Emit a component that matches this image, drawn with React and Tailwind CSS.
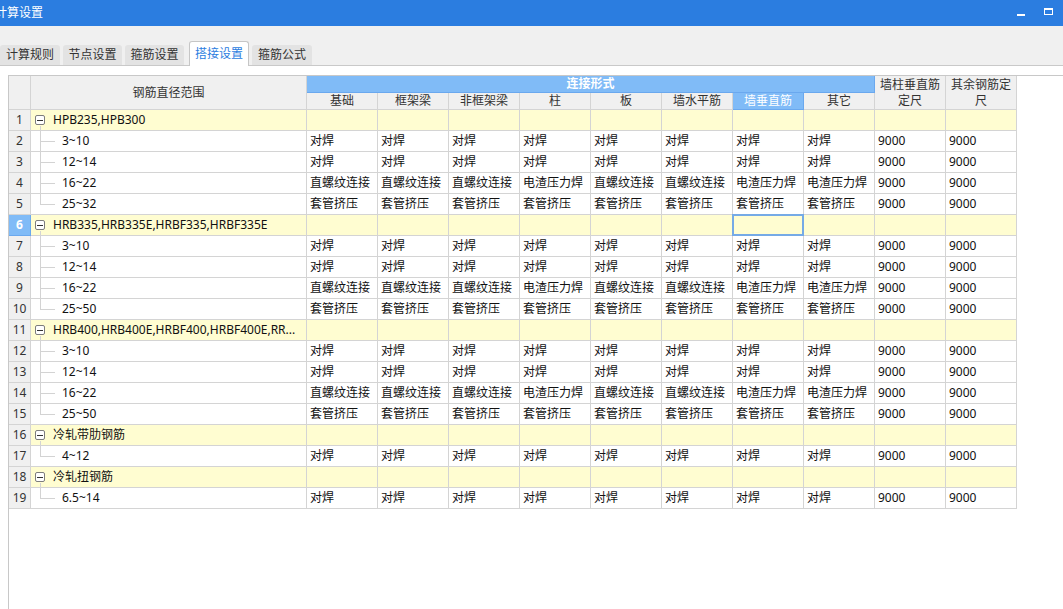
import React from 'react';

const COLS = ['基础', '框架梁', '非框架梁', '柱', '板', '墙水平筋', '墙垂直筋', '其它'];
const all = (v) => Array(8).fill(v);
const mix = ['直螺纹连接', '直螺纹连接', '直螺纹连接', '电渣压力焊', '直螺纹连接', '直螺纹连接', '电渣压力焊', '电渣压力焊'];

const groups = [
  { name: 'HPB235,HPB300', kids: [['3~10', all('对焊')], ['12~14', all('对焊')], ['16~22', mix], ['25~32', all('套管挤压')]] },
  { name: 'HRB335,HRB335E,HRBF335,HRBF335E', kids: [['3~10', all('对焊')], ['12~14', all('对焊')], ['16~22', mix], ['25~50', all('套管挤压')]] },
  { name: 'HRB400,HRB400E,HRBF400,HRBF400E,RR...', kids: [['3~10', all('对焊')], ['12~14', all('对焊')], ['16~22', mix], ['25~50', all('套管挤压')]] },
  { name: '冷轧带肋钢筋', kids: [['4~12', all('对焊')]] },
  { name: '冷轧扭钢筋', kids: [['6.5~14', all('对焊')]] },
];

// flatten tree into grid rows
const rows = [];
groups.forEach((g) => {
  rows.push({ group: true, label: g.name });
  g.kids.forEach((k, i) => rows.push({ group: false, label: k[0], vals: k[1], last: i === g.kids.length - 1 }));
});

const SEL_ROW = 5;
const SEL_COL = 6;

const Tabs = () => {
  const tabs = ['计算规则', '节点设置', '箍筋设置', '搭接设置', '箍筋公式'];
  return (
    <div className="flex items-end h-[40px] bg-[#f0f0f0] border-b border-[#c9c9c9]">
      {tabs.map((t, i) =>
        i === 3 ? (
          <div key={t} className="ml-[5px] mb-[-1px] w-[60px] h-[25px] bg-white border border-b-0 border-[#c6c6c6] rounded-t-[3px] flex items-center justify-center text-[12px] text-[#2b7de0]">
            {t}
          </div>
        ) : (
          <div
            key={t}
            className={`${i === 0 ? 'w-[60px] ml-0' : i === 4 ? 'w-[60px] ml-[3px]' : 'w-[59px] ml-[3px]'} h-[20px] bg-[#e3e3e3] rounded-t-[3px] flex items-center justify-center text-[12px] text-[#333]`}
          >
            {t}
          </div>
        )
      )}
    </div>
  );
};

const Header = () => (
  <div className="flex h-[34px]">
    <div className="w-[22px] shrink-0 bg-[#f0f0f0] border-r border-b border-[#d4d4d4]" />
    <div className="w-[276px] shrink-0 bg-[#f0f0f0] border-r border-b border-[#d4d4d4] flex items-center justify-center text-[12px] text-[#333]">
      钢筋直径范围
    </div>
    <div className="w-[568px] shrink-0 flex flex-col">
      <div className="h-[17px] bg-[#80bbf7] border-r border-b border-[#6aa8ee] flex items-center justify-center text-[12px] font-bold text-white">
        连接形式
      </div>
      <div className="flex h-[17px]">
        {COLS.map((c, i) => (
          <div
            key={c}
            className={`w-[71px] shrink-0 border-r border-b flex items-center justify-center text-[12px] ${i === SEL_COL ? 'bg-[#80bbf7] border-[#6aa8ee] text-white' : 'bg-[#f0f0f0] border-[#d4d4d4] text-[#333]'}`}
          >
            {c}
          </div>
        ))}
      </div>
    </div>
    <div className="w-[71px] shrink-0 bg-[#f0f0f0] border-r border-b border-[#d4d4d4] flex items-center justify-center text-center text-[12px] leading-[16px] text-[#333]">
      墙柱垂直筋定尺
    </div>
    <div className="w-[71px] shrink-0 bg-[#f0f0f0] border-r border-b border-[#d4d4d4] flex items-center justify-center text-center text-[12px] leading-[16px] text-[#333]">
      其余钢筋定尺
    </div>
  </div>
);

const TreeCell = ({ row }) => (
  <div className={`relative w-[276px] shrink-0 border-r border-b border-[#d4d4d4] flex items-center text-[12px] text-[#111] whitespace-nowrap overflow-hidden ${row.group ? 'bg-[#fffdd1]' : 'bg-white'}`}>
    {row.group ? (
      <>
        <div className="ml-[4px] w-[10px] h-[10px] border border-[#7d7d7d] rounded-[2px] bg-white flex items-center justify-center">
          <div className="w-[6px] h-[1px] bg-[#333]" />
        </div>
        <span className="ml-[8px]">{row.label}</span>
        <div className="absolute left-[9px] top-[16px] bottom-0 w-px bg-[#d3d3d3]" />
      </>
    ) : (
      <>
        <div className={`absolute left-[9px] top-0 w-px bg-[#d3d3d3] ${row.last ? 'h-[10px]' : 'h-full'}`} />
        <div className="absolute left-[9px] top-[10px] w-[15px] h-px bg-[#d3d3d3]" />
        <span className="ml-[31px]">{row.label}</span>
      </>
    )}
  </div>
);

const DataRow = ({ row, n }) => {
  const sel = n - 1 === SEL_ROW;
  const vals = row.group ? all('') : row.vals;
  const bg = row.group ? 'bg-[#fffdd1]' : 'bg-white';
  return (
    <div className="flex h-[21px]">
      <div className={`w-[22px] shrink-0 border-r border-b flex items-center justify-center text-[12px] ${sel ? 'bg-[#80bbf7] border-[#6aa8ee] text-white font-bold' : 'bg-[#f0f0f0] border-[#d4d4d4] text-[#333]'}`}>
        {n}
      </div>
      <TreeCell row={row} />
      {vals.map((v, i) => (
        <div key={i} className={`relative w-[71px] shrink-0 border-r border-b border-[#d4d4d4] flex items-center pl-[3px] text-[12px] text-[#111] whitespace-nowrap ${bg}`}>
          {v}
          {sel && i === SEL_COL && (
            <div className="absolute left-[-1px] top-[-1px] w-[72px] h-[22px] border-2 border-[#75aae6]">
              <div className="absolute right-[-4px] bottom-[-4px] w-[4px] h-[4px] bg-[#75aae6]" />
            </div>
          )}
        </div>
      ))}
      {['9000', '9000'].map((v, i) => (
        <div key={'f' + i} className={`w-[71px] shrink-0 border-r border-b border-[#d4d4d4] flex items-center pl-[3px] text-[12px] text-[#111] ${bg}`}>
          {row.group ? '' : v}
        </div>
      ))}
    </div>
  );
};

export default function App() {
  return (
    <div className="w-[1063px] h-[609px] overflow-hidden bg-white font-['Noto_Sans','Noto_Sans_CJK_SC',sans-serif]">
      {/* title bar */}
      <div className="h-[26px] bg-[#2b7de0] flex items-center text-white">
        <span className="ml-[-5px] text-[12px]">计算设置</span>
        <div className="ml-auto mr-[19px] w-[8px] h-[2px] bg-white mt-[4px]" />
        <div className="mr-[10px] w-[9px] h-[7px] border border-t-2 border-white mt-[-3px]" />
      </div>

      <Tabs />

      <div className="mt-[9px] ml-[8px] h-[534px] border-l border-t border-[#c8c8c8]">
        <Header />
        {rows.map((r, i) => (
          <DataRow key={i} row={r} n={i + 1} />
        ))}
      </div>
    </div>
  );
}
